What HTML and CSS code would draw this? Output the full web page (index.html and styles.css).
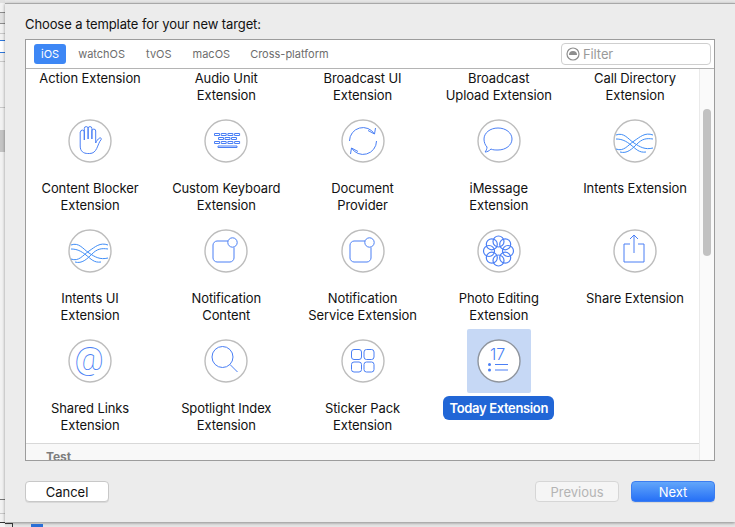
FILE: index.html
```html
<!DOCTYPE html>
<html lang="en">
<head>
    <meta charset="UTF-8">
    <meta name="viewport" content="width=device-width, initial-scale=1.0">
    <title>Choose a template</title>
    <link rel="stylesheet" href="styles.css">
</head>
<body>
    <div class="backdrop">
        <div class="strip">
            <div class="strip-glyph"></div>
            <div class="strip-line first"></div>
            <div class="strip-selected"></div>
            <div class="strip-line second"></div>
            <div class="strip-line third"></div>
            <div class="strip-block"></div>
            <div class="strip-plus"></div>
            <div class="strip-line fourth"></div>
            <div class="strip-dark"></div>
        </div>
        <div class="main">
            <div class="dialog">
                <h1 class="title">Choose a template for your new target:</h1>
                <div class="panel">
                    <div class="tabs">
                        <span class="tab active">iOS</span>
                        <span class="tab">watchOS</span>
                        <span class="tab">tvOS</span>
                        <span class="tab">macOS</span>
                        <span class="tab">Cross-platform</span>
                        <div class="filter">
                            <svg class="filter-icon" viewBox="0 0 14 14"><circle cx="7" cy="7" r="6" fill="none" stroke="#8e8e8e" stroke-width="1.2"/><path d="M3 8a4 4 0 0 1 8 0z" fill="#8e8e8e"/></svg>
                            <span>Filter</span>
                        </div>
                    </div>
                    <div class="body">
                        <div class="scroller">
                            <div class="grid">
                                <div class="item"><div class="label">Action Extension</div></div>
                                <div class="item"><div class="label">Audio Unit<br>Extension</div></div>
                                <div class="item"><div class="label">Broadcast UI<br>Extension</div></div>
                                <div class="item"><div class="label">Broadcast<br>Upload Extension</div></div>
                                <div class="item"><div class="label">Call Directory<br>Extension</div></div>

                                <div class="item">
                                    <div class="icon-box"><svg class="icon" viewBox="0 0 44 44"><circle class="ring" cx="22" cy="22" r="21"/><path class="glyph" d="M12.500 13a1.900 1.900 0 0 1 3.800 0v8M16.300 21V9.500a1.900 1.900 0 0 1 3.800 0V20M20.100 20V9.500a1.900 1.900 0 0 1 3.800 0V20M23.900 20V12a1.900 1.900 0 0 1 3.800 0v12c1-2 2-4 4-5 1-.5 2 .5 1.500 1.500-2 2-3 6-4.500 9-1.500 3-3.500 5-7 5h-2c-4 0-7.500-2-7.500-7.500V13"/></svg></div>
                                    <div class="label">Content Blocker<br>Extension</div>
                                </div>
                                <div class="item">
                                    <div class="icon-box"><svg class="icon" viewBox="0 0 44 44"><circle class="ring" cx="22" cy="22" r="21"/><path class="glyph" d="M10.500 14.500h5v2h-5zM17.200 14.500h5v2h-5zM23.900 14.500h5v2h-5zM30.600 14.500h5v2h-5zM14.500 18.500h5v2h-5zM21 18.500h5v2h-5zM27.500 18.500h5v2h-5zM10.500 22.500h5v2h-5zM17.200 22.500h5v2h-5zM23.900 22.500h5v2h-5zM30.600 22.500h5v2h-5zM14 27h19v1.500H14z"/></svg></div>
                                    <div class="label">Custom Keyboard<br>Extension</div>
                                </div>
                                <div class="item">
                                    <div class="icon-box"><svg class="icon" viewBox="0 0 44 44"><circle class="ring" cx="22" cy="22" r="21"/><path class="glyph" d="M8.500 22A13.500 13.500 0 0 1 33.500 15M27 11.500l6.500 3.500 1-6M35.500 22A13.500 13.500 0 0 1 10.500 29M17 32.500l-6.500-3.500-1 6"/></svg></div>
                                    <div class="label">Document<br>Provider</div>
                                </div>
                                <div class="item">
                                    <div class="icon-box"><svg class="icon" viewBox="0 0 44 44"><circle class="ring" cx="22" cy="22" r="21"/><path class="glyph" d="M21 9c8 0 14 5 14 11s-6 11-14 11c-3 0-5 0-7-1-2 2-4 3-6 3 1-1 2-3 2-5-2-2-3-5-3-8 0-6 6-11 14-11z"/></svg></div>
                                    <div class="label">iMessage<br>Extension</div>
                                </div>
                                <div class="item">
                                    <div class="icon-box"><svg class="icon" viewBox="0 0 44 44"><circle class="ring" cx="22" cy="22" r="21"/><path class="glyph wave" d="M3 16C11 13 15 20 21 24S32 31 40 29M3 20C9 20 13 22 18 26S26 34 33 33M3 30C11 33 15 26 21 22S32 13 40 16M7 33C14 35 19 30 24 25S33 19 40 20"/></svg></div>
                                    <div class="label">Intents Extension</div>
                                </div>

                                <div class="item">
                                    <div class="icon-box"><svg class="icon" viewBox="0 0 44 44"><circle class="ring" cx="22" cy="22" r="21"/><path class="glyph wave" d="M3 16C11 13 15 20 21 24S32 31 40 29M3 20C9 20 13 22 18 26S26 34 33 33M3 30C11 33 15 26 21 22S32 13 40 16M7 33C14 35 19 30 24 25S33 19 40 20"/></svg></div>
                                    <div class="label">Intents UI<br>Extension</div>
                                </div>
                                <div class="item">
                                    <div class="icon-box"><svg class="icon" viewBox="0 0 44 44"><circle class="ring" cx="22" cy="22" r="21"/><path class="glyph" d="M24 12H13c-2 0-4 2-4 4v13c0 2 2 4 4 4h13c2 0 4-2 4-4V18.500"/><circle class="glyph" cx="28.500" cy="13.500" r="4.700"/></svg></div>
                                    <div class="label">Notification<br>Content</div>
                                </div>
                                <div class="item">
                                    <div class="icon-box"><svg class="icon" viewBox="0 0 44 44"><circle class="ring" cx="22" cy="22" r="21"/><path class="glyph" d="M24 12H13c-2 0-4 2-4 4v13c0 2 2 4 4 4h13c2 0 4-2 4-4V18.500"/><circle class="glyph" cx="28.500" cy="13.500" r="4.700"/></svg></div>
                                    <div class="label">Notification<br>Service Extension</div>
                                </div>
                                <div class="item">
                                    <div class="icon-box"><svg class="icon" viewBox="0 0 44 44"><circle class="ring" cx="22" cy="22" r="21"/><g class="glyph flower"><circle cx="21.500" cy="12.500" r="5.500"/><circle cx="21.500" cy="31.500" r="5.500"/><circle cx="12" cy="22" r="5.500"/><circle cx="31" cy="22" r="5.500"/><circle cx="14.800" cy="15.300" r="5.500"/><circle cx="28.200" cy="15.300" r="5.500"/><circle cx="14.800" cy="28.700" r="5.500"/><circle cx="28.200" cy="28.700" r="5.500"/></g></svg></div>
                                    <div class="label">Photo Editing<br>Extension</div>
                                </div>
                                <div class="item">
                                    <div class="icon-box"><svg class="icon" viewBox="0 0 44 44"><circle class="ring" cx="22" cy="22" r="21"/><path class="glyph" d="M17 15H11v18h20V15h-6M21 24V6M17 10l4-4 4 4"/></svg></div>
                                    <div class="label">Share Extension</div>
                                </div>

                                <div class="item">
                                    <div class="icon-box"><svg class="icon" viewBox="0 0 44 44"><circle class="ring" cx="22" cy="22" r="21"/><text class="at" x="21" y="31" text-anchor="middle">@</text></svg></div>
                                    <div class="label">Shared Links<br>Extension</div>
                                </div>
                                <div class="item">
                                    <div class="icon-box"><svg class="icon" viewBox="0 0 44 44"><circle class="ring" cx="22" cy="22" r="21"/><circle class="glyph" cx="18.500" cy="18" r="10.500"/><path class="glyph" d="M26 25.500l7.500 7.500"/></svg></div>
                                    <div class="label">Spotlight Index<br>Extension</div>
                                </div>
                                <div class="item">
                                    <div class="icon-box"><svg class="icon" viewBox="0 0 44 44"><circle class="ring" cx="22" cy="22" r="21"/><g class="glyph"><rect x="10.500" y="10.500" width="10" height="10" rx="2.500"/><rect x="23" y="10.500" width="10" height="10" rx="2.500"/><rect x="10.500" y="23" width="10" height="10" rx="2.500"/><rect x="23" y="23" width="10" height="10" rx="2.500"/></g></svg></div>
                                    <div class="label">Sticker Pack<br>Extension</div>
                                </div>
                                <div class="item selected">
                                    <div class="icon-box"><svg class="icon" viewBox="0 0 44 44"><circle class="ring" cx="22" cy="22" r="21"/><text class="date" x="20.500" y="20.500" text-anchor="middle">17</text><path class="glyph" d="M18 25.500h13M18 31h13"/><circle class="dot" cx="12.500" cy="25.500" r="1.500"/><circle class="dot" cx="12.500" cy="31" r="1.500"/></svg></div>
                                    <div class="label"><span class="pill">Today Extension</span></div>
                                </div>
                            </div>
                            <div class="section">Test</div>
                        </div>
                        <div class="scrollbar"><div class="thumb"></div></div>
                    </div>
                </div>
                <div class="actions">
                    <button class="btn">Cancel</button>
                    <div class="actions-right">
                        <button class="btn disabled">Previous</button>
                        <button class="btn primary">Next</button>
                    </div>
                </div>
            </div>
            <div class="under">
                <div class="under-box"></div>
                <div class="under-tab"></div>
            </div>
        </div>
    </div>
</body>
</html>
```

FILE: styles.css
```css
* {
    box-sizing: border-box;
}
html, body {
    margin: 0;
    padding: 0;
    height: 527px;
    overflow: hidden;
}
body {
    font-family: "Inter", "Liberation Sans", Arial, sans-serif;
    font-size: 13px;
    letter-spacing: -0.1px;
    color: #111;
    background-color: #e6e6e6;
}
.backdrop {
    height: 527px;
    display: flex;
}

/* bits of the window behind the sheet */
.strip {
    width: 5px;
    flex: none;
    background-color: #f2f2f2;
    border-top: 3px solid #e0e0e0;
    display: flex;
    flex-direction: column;
}
.strip-glyph {
    height: 12px;
    margin-top: 9px;
    border-top: 1px solid #8c8c8c;
    border-bottom: 1px solid #8c8c8c;
    background-color: #e2e2e2;
}
.strip-line {
    height: 1px;
    background-color: #c9c9c9;
}
.strip-line.first {
    margin-top: 9px;
}
.strip-selected {
    height: 13px;
    margin-top: 6px;
    border-top: 1px solid #2f78dd;
    border-bottom: 1px solid #2f78dd;
    background-color: #fff;
}
.strip-line.second {
    margin-top: 8px;
}
.strip-line.third {
    margin-top: 45px;
}
.strip-block {
    height: 22px;
    margin-top: 22px;
    background-color: #c4c4c4;
}
.strip-plus {
    height: 9px;
    margin-top: 343px;
    background: linear-gradient(#777, #777) center / 5px 1px no-repeat;
}
.strip-line.fourth {
    margin-top: 9px;
}
.strip-dark {
    height: 1px;
    margin-top: 8px;
    background-color: #333;
}
.main {
    flex: 1;
    min-width: 0;
    padding-top: 3px;
    background-color: #e6e6e6;
}
.dialog {
    height: 519px;
    background-color: #ececec;
    border-top: 1px solid #a8a8a8;
    box-shadow: 0 1px 3px rgba(0, 0, 0, 0.4);
    padding: 0 20px;
    display: flex;
    flex-direction: column;
}
.title {
    margin: 0;
    padding-top: 12px;
    height: 35px;
    font-size: 13px;
    font-weight: 400;
    line-height: 16px;
}
.panel {
    height: 422px;
    border: 1px solid #9c9c9c;
    background-color: #fff;
    display: flex;
    flex-direction: column;
}
.tabs {
    height: 29px;
    flex: none;
    border-bottom: 1px solid #b4b4b4;
    background-color: #fff;
    display: flex;
    align-items: center;
    padding: 0 3px 0 8px;
}
.tab {
    font-size: 11px;
    letter-spacing: 0;
    color: #6d6d6d;
    margin-right: 21px;
    line-height: 19px;
    padding-top: 1px;
}
.tab:nth-child(4) {
    margin-right: 20px;
}
.tab.active {
    background-color: #3d87f5;
    color: #fff;
    border-radius: 3px;
    padding: 1px 7px 0;
    margin-right: 12px;
}
.filter {
    margin-left: auto;
    width: 150px;
    height: 22px;
    border: 1px solid #cfcfcf;
    border-radius: 4px;
    display: flex;
    align-items: center;
    gap: 3px;
    padding-left: 4px;
    color: #9a9a9a;
    font-size: 13px;
}
.filter-icon {
    width: 14px;
    height: 14px;
}
.body {
    flex: 1;
    display: flex;
    min-height: 0;
}
.scroller {
    flex: 1;
    overflow: hidden;
    padding-top: 1px;
}
.grid {
    display: grid;
    grid-template-columns: repeat(5, 136.25px);
    justify-content: center;
    align-content: start;
    row-gap: 5px;
    padding-bottom: 9px;
}
.item {
    display: flex;
    flex-direction: column;
    align-items: center;
}
.icon-box {
    width: 64px;
    height: 64px;
    margin-bottom: 7px;
    border-radius: 2px;
    display: flex;
    align-items: center;
    justify-content: center;
}
.selected .icon-box {
    background-color: #c6d8f5;
}
.icon {
    width: 44px;
    height: 44px;
}
.ring {
    fill: #fff;
    stroke: #bdbdbd;
    stroke-width: 1.4;
}
.selected .ring {
    stroke: #8f959e;
}
.glyph {
    fill: none;
    stroke: #4a7ff5;
    stroke-width: 1;
}
.wave {
    stroke: #3f8df7;
}
.flower {
    stroke-width: 1.2;
}
.dot {
    fill: #4a7ff5;
}
.date {
    font-size: 16px;
    font-weight: 300;
    letter-spacing: 0;
    fill: #4a7ff5;
}
.at {
    font-family: "Roboto", sans-serif;
    font-size: 32px;
    font-weight: 100;
    fill: #4a7ff5;
}
.label {
    height: 34px;
    line-height: 17px;
    text-align: center;
    white-space: nowrap;
    font-size: 13px;
}
.pill {
    display: inline-block;
    margin-top: -4px;
    padding: 4px 6px 3px;
    background-color: #2166d6;
    color: #fff;
    font-weight: 600;
    letter-spacing: -0.35px;
    border-radius: 6px;
}
.section {
    height: 24px;
    border-top: 1px solid #d8d8d8;
    background-color: #f8f8f8;
    padding: 5px 0 0 20px;
    font-weight: 700;
    font-size: 12px;
    color: #7d7d7d;
    line-height: 16px;
}
.scrollbar {
    width: 15px;
    flex: none;
    background-color: #fafafa;
    border-left: 1px solid #eaeaea;
    padding: 40px 3px 0 3px;
}
.thumb {
    width: 8px;
    height: 147px;
    border-radius: 4px;
    background-color: #c1c1c1;
}
.actions {
    display: flex;
    justify-content: space-between;
    padding-top: 20px;
}
.actions-right {
    display: flex;
    gap: 12px;
}
.btn {
    width: 84px;
    height: 21px;
    padding: 0;
    font-family: inherit;
    font-size: 13px;
    color: #111;
    background-color: #fff;
    border: 1px solid #c8c8c8;
    border-radius: 4px;
    box-shadow: 0 1px 0 rgba(0, 0, 0, 0.08);
}
.btn.disabled {
    background-color: #f5f5f5;
    border-color: #d6d6d6;
    color: #b4b4b4;
    box-shadow: none;
}
.btn.primary {
    color: #fff;
    border-color: #3b7df0;
    background: linear-gradient(#62a6fa, #2670f6);
}
.under {
    display: flex;
    align-items: flex-end;
    height: 5px;
}
.under-box {
    width: 8px;
    height: 4px;
    border-top: 1px solid #333;
    border-right: 1px solid #333;
}
.under-tab {
    width: 12px;
    height: 3px;
    margin-left: 18px;
    background-color: #2b6fd6;
}
```
